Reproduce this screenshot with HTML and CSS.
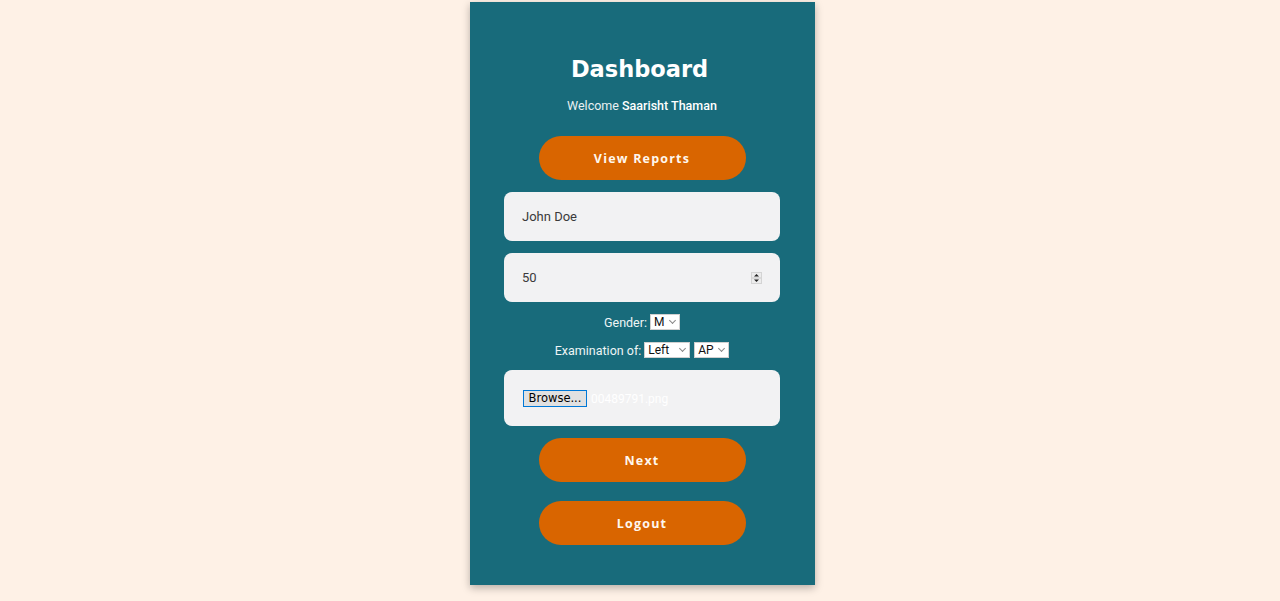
FILE: index.html
```html
<!DOCTYPE html>
<html>
<head>
<meta charset="utf-8">
<link rel="stylesheet" href="styles.css">
</head>
<body>
<div class="page">
  <main class="card">
    <h1 class="title">Dashboard</h1>
    <p class="welcome">Welcome <strong>Saarisht Thaman</strong></p>
    <button class="btn btn-first">View Reports</button>
    <div class="field"><input class="input" type="text" value="John Doe"></div>
    <div class="field field-num">
      <input class="input" type="text" value="50">
      <span class="spin">
        <svg width="11" height="12" viewBox="0 0 11 12">
          <rect x="0.5" y="0.5" width="10" height="11" fill="#ececec" stroke="#d4d4d4"/>
          <line x1="1" y1="6" x2="10" y2="6" stroke="#c8c8c8"/>
          <path d="M3 4.5 L5.5 2 L8 4.5 Z" fill="#222"/>
          <path d="M3 7.5 L5.5 10 L8 7.5 Z" fill="#222"/>
        </svg>
      </span>
    </div>
    <div class="row row-gender">
      <label class="lbl">Gender:</label>
      <span class="sel sel-m">M<i class="chev"></i></span>
    </div>
    <div class="row row-exam">
      <label class="lbl">Examination of:</label>
      <span class="sel sel-left">Left<i class="chev"></i></span>
      <span class="sel sel-ap">AP<i class="chev"></i></span>
    </div>
    <div class="field field-file">
      <span class="browse">Browse...</span>
      <span class="fname">00489791.png</span>
    </div>
    <button class="btn btn-next">Next</button>
    <button class="btn btn-logout">Logout</button>
  </main>
</div>
</body>
</html>
```
FILE: styles.css
```css
html, body {
  margin: 0;
  padding: 0;
  background: #fef1e6;
  height: 100%;
  overflow: hidden;
}
.page {
  display: flex;
  justify-content: center;
  padding-top: 2px;
  padding-left: 5px;
}
.card {
  width: 345px;
  height: 583px;
  box-sizing: border-box;
  background: #186b7b;
  box-shadow: 0 3px 8px rgba(0,0,0,0.28);
  display: flex;
  flex-direction: column;
  align-items: center;
  padding-top: 53px;
  padding-right: 1px;
}
.title {
  margin: 0 0 0 -5px;
  font-family: "DejaVu Sans", Verdana, sans-serif;
  font-weight: bold;
  font-size: 22.5px;
  line-height: 28px;
  color: #ffffff;
}
.welcome {
  margin: 15px 0 0 0;
  font-family: Roboto, sans-serif;
  font-size: 12.5px;
  line-height: 16px;
  color: #e8f0f2;
}
.welcome strong {
  font-weight: 500;
  color: #ffffff;
}
.btn {
  width: 207px;
  height: 44px;
  border: none;
  border-radius: 22px;
  background: #d96500;
  color: #fff7ee;
  font-family: "Open Sans", sans-serif;
  font-weight: 700;
  font-size: 12.5px;
  letter-spacing: 1.2px;
  cursor: pointer;
}
.btn-first { margin-top: 22px; }
.btn-next { margin-top: 12px; }
.btn-logout { margin-top: 19px; }
.field {
  width: 276px;
  height: 49px;
  box-sizing: border-box;
  background: #f2f2f3;
  border-radius: 8px;
  display: flex;
  align-items: center;
  padding: 0 18px;
  margin-top: 12px;
}
.field-num { padding-right: 18px; }
.input {
  flex: 1;
  min-width: 0;
  border: none;
  background: transparent;
  outline: none;
  font-family: Roboto, sans-serif;
  font-size: 13px;
  color: #3a3a3a;
  padding: 0;
}
.spin { display: flex; }
.row {
  display: flex;
  align-items: center;
  gap: 3px;
  font-family: Roboto, sans-serif;
  font-size: 12.5px;
  color: #eef5f6;
}
.row-gender { margin-top: 12px; }
.row-exam { margin-top: 12px; }
.sel {
  display: inline-flex;
  align-items: center;
  justify-content: space-between;
  height: 16px;
  box-sizing: border-box;
  background: #ffffff;
  color: #111;
  font-family: Roboto, sans-serif;
  font-size: 12px;
  padding: 0 3px 0 3px;
  border: 1px solid #d0d0d0;
}
.sel-m { width: 30px; }
.sel-left { width: 46px; }
.sel-ap { width: 35px; margin-left: 1px; }
.chev {
  width: 4px;
  height: 4px;
  border-right: 1px solid #888;
  border-bottom: 1px solid #888;
  transform: rotate(45deg);
  margin-top: -3px;
  margin-right: 1px;
}
.field-file {
  height: 56px;
  margin-top: 12px;
  padding-left: 19px;
  gap: 4px;
}
.browse {
  height: 17px;
  width: 64px;
  box-sizing: border-box;
  border: 1px solid #0078d7;
  background: #e1e1e1;
  font-family: "DejaVu Sans", Tahoma, sans-serif;
  font-size: 11.5px;
  line-height: 15px;
  text-align: center;
  color: #000;
  margin-top: 1px;
}
.fname {
  font-family: Roboto, sans-serif;
  font-size: 12px;
  color: #ffffff;
  margin-top: 1px;
}
```
